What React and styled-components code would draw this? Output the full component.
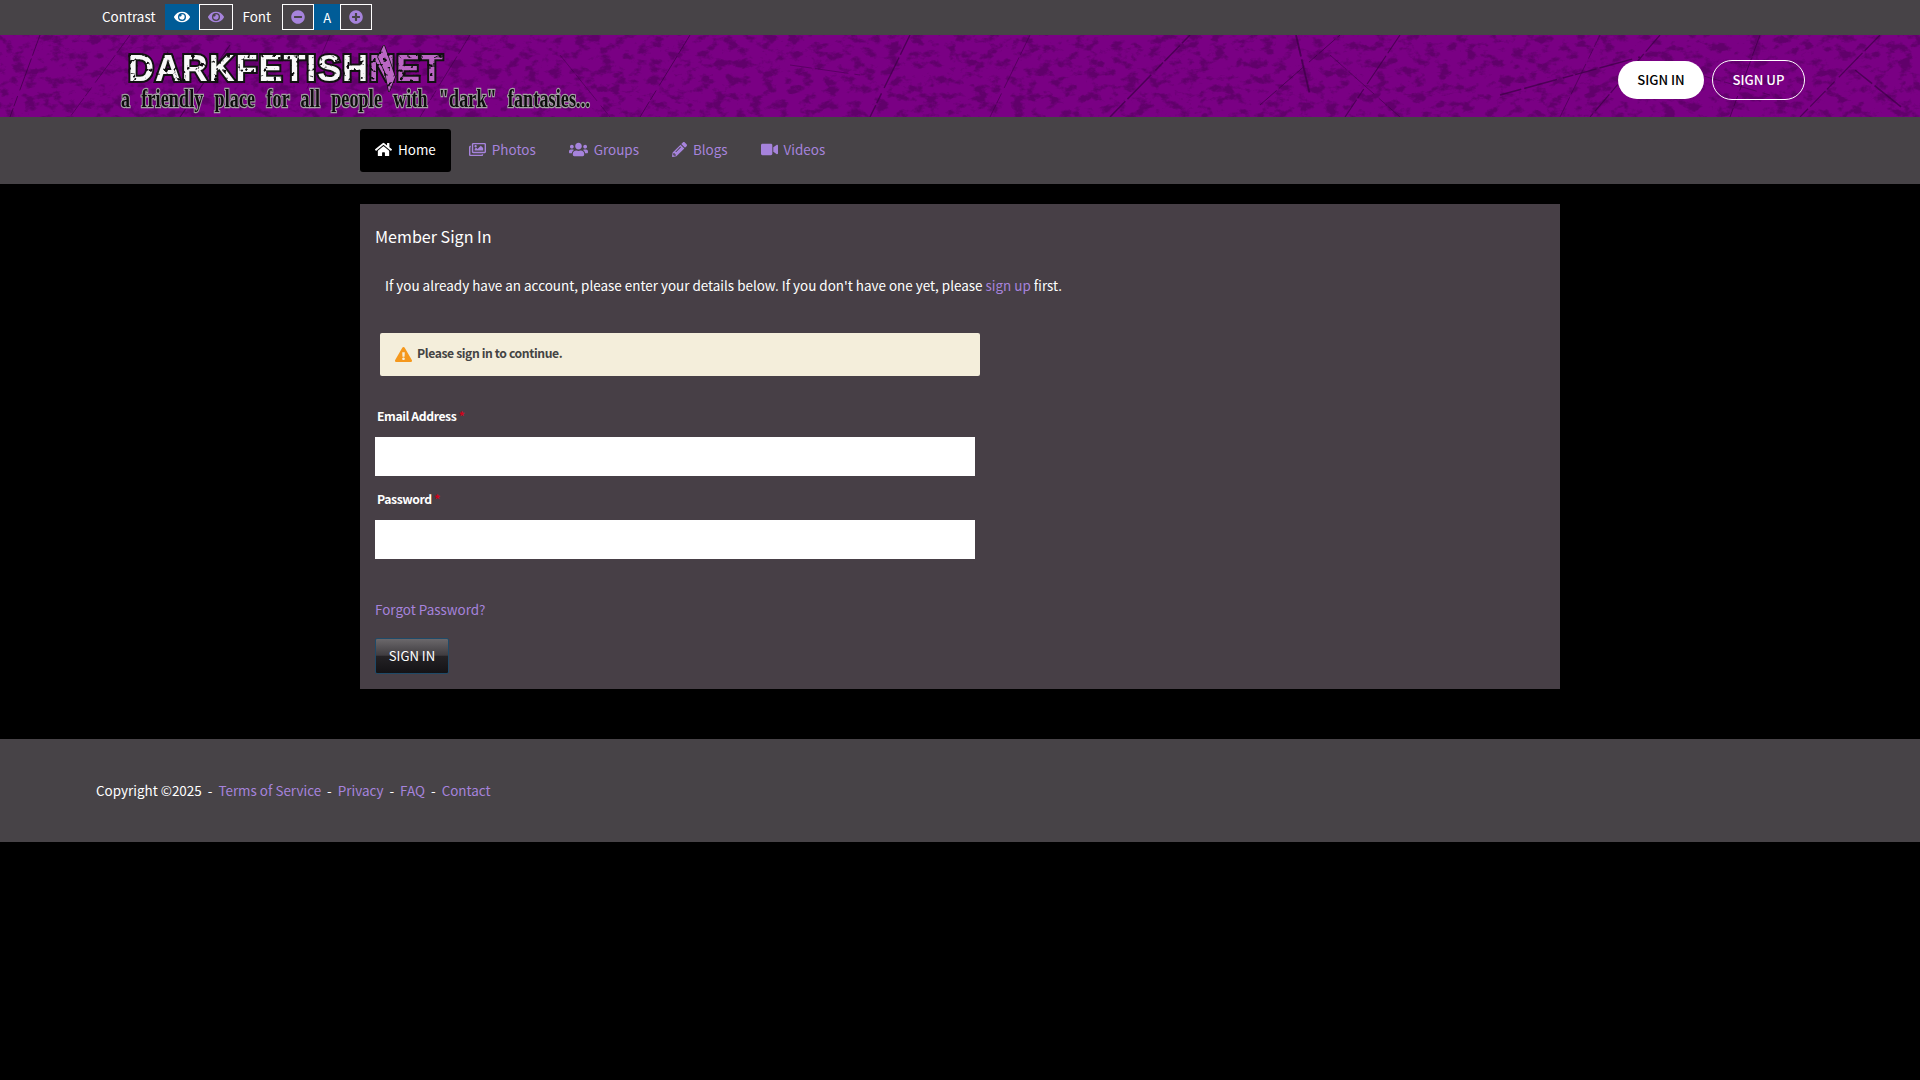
import React from 'react';
import styled, { createGlobalStyle } from 'styled-components';
import {
  FaEye, FaMinusCircle, FaPlusCircle, FaHome, FaRegImages, FaUsers,
  FaPencilAlt, FaVideo, FaExclamationTriangle,
} from 'react-icons/fa';

const GlobalStyle = createGlobalStyle`
  html, body {
    margin: 0;
    min-height: 100%;
    background: #000;
    color: #fff;
    font-family: "Noto Sans CJK SC", "Noto Sans", sans-serif;
    font-size: 13.44px;
  }
  * { box-sizing: border-box; }
  a { color: #a683dc; text-decoration: none; }
`;

const TopBar = styled.div`
  height: 35px;
  background: #474347;
  display: flex;
  align-items: center;
  padding: 0 0 1px 102px;
`;

const BarLabel = styled.span`
  font-size: 13.44px;
  margin: -2px ${(p) => p.$right}px 0 ${(p) => p.$left || 0}px;
`;

const ToolButton = styled.button`
  width: ${(p) => p.$width || 34}px;
  height: 26px;
  padding: 0;
  display: flex;
  align-items: center;
  justify-content: center;
  font: inherit;
  font-size: 13px;
  color: ${(p) => (p.$active ? '#fff' : '#a683dc')};
  background: ${(p) => (p.$active ? '#005c97' : 'transparent')};
  border: 1px solid ${(p) => (p.$active ? '#005c97' : '#fff')};
  svg { font-size: ${(p) => p.$icon || 16}px; }
`;

const Banner = styled.header`
  position: relative;
  height: 82px;
  background: #7a0084;
  overflow: hidden;
  display: flex;
  align-items: center;
  justify-content: space-between;
  padding: 0 115px 0 121px;
`;

const Scratches = styled.svg`
  position: absolute;
  inset: 0;
  width: 100%;
  height: 100%;
`;

const Logo = styled.div`
  position: relative;
  display: flex;
  flex-direction: column;
  line-height: 1;
  margin-top: 10px;
`;

const LogoTitle = styled.div`
  position: relative;
  margin-left: 7px;
  font-family: "Liberation Sans", sans-serif;
  font-weight: 700;
  font-size: 36px;
  letter-spacing: 0.9px;
  height: 33px;
  line-height: 37px;
  color: #f8f8f8;
  -webkit-text-stroke: 4px #111;
  paint-order: stroke fill;
  white-space: nowrap;
  filter: url(#distress);
`;

const LogoNet = styled.span`
  color: #bb66c4;
`;

const Shard = styled.svg`
  position: absolute;
  left: 246px;
  top: -5px;
  width: 24px;
  height: 47px;
`;

const Tagline = styled.div`
  position: relative;
  margin-top: 3px;
  font-family: "Liberation Serif", serif;
  font-weight: 700;
  font-size: 25px;
  line-height: 26px;
  word-spacing: 9px;
  letter-spacing: 0.2px;
  color: #0c0c0c;
  -webkit-text-stroke: 2.5px #a2a2a2;
  paint-order: stroke fill;
  white-space: nowrap;
  transform: scaleX(0.72);
  transform-origin: left center;
`;

const AuthRow = styled.div`
  position: relative;
  display: flex;
  align-items: center;
  gap: 8px;
  margin-top: 8px;
`;

const AuthButton = styled.a`
  display: flex;
  align-items: center;
  justify-content: center;
  height: ${(p) => (p.$solid ? 38 : 40)}px;
  width: ${(p) => (p.$solid ? 86 : 93)}px;
  padding-bottom: 2px;
  border-radius: 20px;
  font-size: 13.1px;
  font-weight: 500;
  color: ${(p) => (p.$solid ? '#000' : '#fff')};
  background: ${(p) => (p.$solid ? '#fff' : 'transparent')};
  border: ${(p) => (p.$solid ? 'none' : '1px solid #fff')};
`;

const NavBar = styled.nav`
  height: 67px;
  background: #474347;
  padding: 12px 360px 0;
  display: flex;
  align-items: flex-start;
  gap: 2px;
`;

const NavItem = styled.a`
  height: 43px;
  display: flex;
  align-items: center;
  gap: 6px;
  padding: 0 15px 3px;
  margin-right: 1px;
  border-radius: 3px;
  font-size: 13.44px;
  color: ${(p) => (p.$active ? '#fff' : '#a683dc')};
  background: ${(p) => (p.$active ? '#000' : 'transparent')};
  svg { flex-shrink: 0; margin-top: 1px; }
`;

const Panel = styled.main`
  width: 1200px;
  height: 485px;
  margin: 20px 0 0 360px;
  padding: 20px 15px 0;
  background: #473f46;
`;

const Title = styled.h1`
  margin: 0;
  font-size: 16.1px;
  font-weight: 400;
  line-height: 24px;
`;

const Intro = styled.p`
  margin: 25px 0 0 10px;
  font-size: 13.44px;
  line-height: 24px;
`;

const Alert = styled.div`
  width: 600px;
  height: 43px;
  margin: 36px 0 0 5px;
  padding: 0 15px 3px;
  display: flex;
  align-items: center;
  gap: 5px;
  border-radius: 2px;
  background: #f4eedb;
  color: #444;
  font-size: 12.2px;
  font-weight: 700;
  letter-spacing: -0.4px;
  svg { color: #f5981d; font-size: 17px; margin-top: 2px; }
`;

const FieldLabel = styled.label`
  display: block;
  margin: ${(p) => p.$top}px 0 ${(p) => p.$bottom}px 2px;
  font-size: 12.2px;
  font-weight: 700;
  letter-spacing: -0.4px;
  line-height: 20px;
`;

const Star = styled.span`
  color: #d0021b;
`;

const TextInput = styled.input`
  display: block;
  width: 600px;
  height: 39px;
  border: none;
  border-radius: 0;
  background: #fff;
`;

const ForgotLink = styled.a`
  display: block;
  margin-top: 39px;
  font-size: 13.44px;
  line-height: 22px;
`;

const SubmitButton = styled.button`
  display: block;
  width: 74px;
  height: 36px;
  margin-top: 18px;
  padding: 0 0 2px;
  font: inherit;
  font-size: 13.1px;
  color: #fff;
  border: 1px solid #1f4a68;
  border-radius: 2px;
  background: linear-gradient(#6b686b 0%, #3f3c40 48%, #242225 50%, #141316 100%);
`;

const Footer = styled.footer`
  height: 103px;
  margin-top: 50px;
  padding: 0 0 2px 96px;
  background: #474347;
  display: flex;
  align-items: center;
  font-size: 13.44px;
`;

const Dash = styled.span`
  margin: 0 6px;
`;

const scratches = [
  [40, 0, 10, 82, 1], [130, 0, 70, 82, 0.8], [230, 10, 180, 82, 1.2], [330, 0, 300, 70, 0.7], [470, 0, 420, 82, 0.8],
  [560, 20, 610, 82, 0.7], [690, 0, 640, 82, 1], [790, 30, 860, 40, 0.7], [910, 0, 870, 82, 1.4], [1030, 0, 990, 82, 0.8],
  [1110, 82, 1190, 0, 1.5], [1260, 70, 1340, 0, 1], [1330, 20, 1400, 82, 0.8], [1296, 0, 1310, 60, 1.8],
  [1400, 0, 1345, 82, 1.2], [1500, 60, 1640, 22, 1.4], [1560, 82, 1600, 0, 0.8], [1660, 0, 1590, 82, 1.2],
  [1700, 40, 1770, 60, 0.7], [1760, 0, 1730, 82, 1], [1880, 0, 1800, 82, 1.2], [1855, 35, 1905, 75, 1.6],
];

const App = () => {
  return (
    <>
      <GlobalStyle />
      <TopBar>
        <BarLabel $right={10}>Contrast</BarLabel>
        <ToolButton $active><FaEye /></ToolButton>
        <ToolButton><FaEye /></ToolButton>
        <BarLabel $left={9} $right={11}>Font</BarLabel>
        <ToolButton $width={32} $icon={14}><FaMinusCircle /></ToolButton>
        <ToolButton $active $width={26}>A</ToolButton>
        <ToolButton $width={32} $icon={14}><FaPlusCircle /></ToolButton>
      </TopBar>

      <Banner>
        <Scratches viewBox="0 0 1920 82" preserveAspectRatio="none">
          <defs>
            <filter id="grain" x="0" y="0" width="100%" height="100%" colorInterpolationFilters="sRGB">
              <feTurbulence type="fractalNoise" baseFrequency="0.08 0.12" numOctaves="4" seed="7" />
              <feColorMatrix values="0 0 0 0 0.2  0 0 0 0 0  0 0 0 0 0.24  0 0 0 -5 2.5" />
            </filter>
            <filter id="distress" x="-2%" y="-10%" width="104%" height="120%" colorInterpolationFilters="sRGB">
              <feTurbulence type="fractalNoise" baseFrequency="0.22" numOctaves="2" seed="3" result="noise" />
              <feColorMatrix in="noise" values="0 0 0 0 0.05  0 0 0 0 0.05  0 0 0 0 0.05  0 0 0 9 -5.4" result="specks" />
              <feComposite in="specks" in2="SourceAlpha" operator="in" result="clipped" />
              <feMerge>
                <feMergeNode in="SourceGraphic" />
                <feMergeNode in="clipped" />
              </feMerge>
            </filter>
          </defs>
          <rect width="1920" height="82" filter="url(#grain)" opacity="0.35" />
          {scratches.map(([x1, y1, x2, y2, w]) => (
            <line key={`${x1}-${y1}`} x1={x1} y1={y1} x2={x2} y2={y2} stroke="#3a0044" strokeWidth={w} strokeDasharray="22 3 34 6 11 2" opacity="0.7" />
          ))}
        </Scratches>
        <Logo>
          <LogoTitle>
            DARKFETISH<LogoNet>NET</LogoNet>
            <Shard viewBox="0 0 24 47">
              <polygon points="10,0 15,14 21,32 15,47 11,27 4,12" fill="#bb66c4" stroke="#111" strokeWidth="1.5" />
            </Shard>
          </LogoTitle>
          <Tagline>a friendly place for all people with "dark" fantasies...</Tagline>
        </Logo>
        <AuthRow>
          <AuthButton $solid href="#">SIGN IN</AuthButton>
          <AuthButton href="#">SIGN UP</AuthButton>
        </AuthRow>
      </Banner>

      <NavBar>
        <NavItem $active href="#"><FaHome size={17} />Home</NavItem>
        <NavItem href="#"><FaRegImages size={17} />Photos</NavItem>
        <NavItem href="#"><FaUsers size={19} />Groups</NavItem>
        <NavItem href="#"><FaPencilAlt size={15} />Blogs</NavItem>
        <NavItem href="#"><FaVideo size={17} />Videos</NavItem>
      </NavBar>

      <Panel>
        <Title>Member Sign In</Title>
        <Intro>
          If you already have an account, please enter your details below. If you don't have one yet, please <a href="#">sign up</a> first.
        </Intro>
        <Alert><FaExclamationTriangle />Please sign in to continue.</Alert>
        <FieldLabel $top={30} $bottom={11}>Email Address <Star>*</Star></FieldLabel>
        <TextInput type="text" />
        <FieldLabel $top={13} $bottom={11}>Password <Star>*</Star></FieldLabel>
        <TextInput type="password" />
        <ForgotLink href="#">Forgot Password?</ForgotLink>
        <SubmitButton>SIGN IN</SubmitButton>
      </Panel>

      <Footer>
        Copyright ©2025<Dash>-</Dash>
        <a href="#">Terms of Service</a><Dash>-</Dash>
        <a href="#">Privacy</a><Dash>-</Dash>
        <a href="#">FAQ</a><Dash>-</Dash>
        <a href="#">Contact</a>
      </Footer>
    </>
  );
};

export default App;
